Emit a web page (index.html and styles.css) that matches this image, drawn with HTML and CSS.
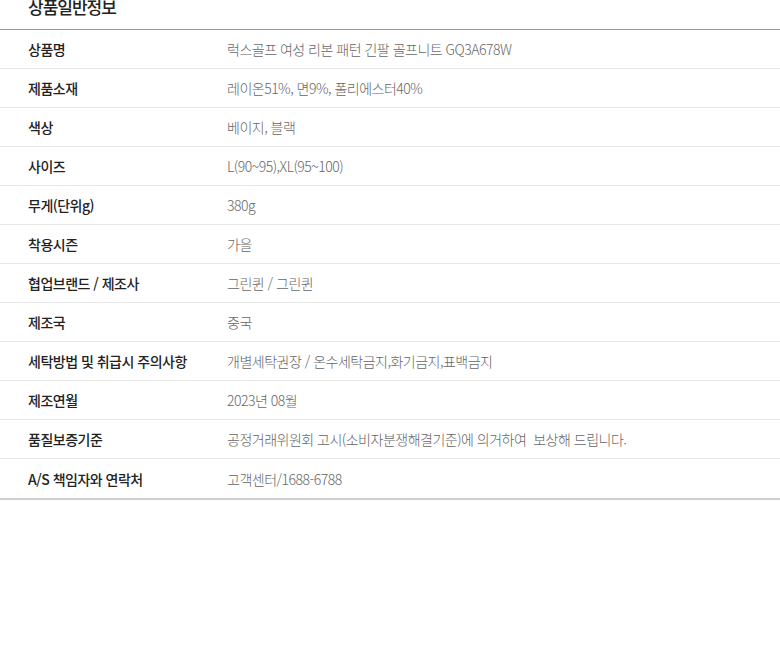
FILE: index.html
```html
<!DOCTYPE html>
<html lang="ko">
<head>
    <meta charset="UTF-8">
    <title>상품일반정보</title>
    <link rel="stylesheet" href="styles.css">
</head>
<body>
    <!-- 상품 정보 고시 -->
    <div class="product-info">
        <h2 class="info-title">상품일반정보</h2>
        <ul class="info-list">
            <li class="info-row"><span class="info-label">상품명</span><span class="info-value">럭스골프 여성 리본 패턴 긴팔 골프니트 GQ3A678W</span></li>
            <li class="info-row"><span class="info-label">제품소재</span><span class="info-value">레이온51%, 면9%, 폴리에스터40%</span></li>
            <li class="info-row"><span class="info-label">색상</span><span class="info-value">베이지, 블랙</span></li>
            <li class="info-row"><span class="info-label">사이즈</span><span class="info-value">L(90~95),XL(95~100)</span></li>
            <li class="info-row"><span class="info-label">무게(단위g)</span><span class="info-value">380g</span></li>
            <li class="info-row"><span class="info-label">착용시즌</span><span class="info-value">가을</span></li>
            <li class="info-row"><span class="info-label">협업브랜드 / 제조사</span><span class="info-value">그린퀸 / 그린퀸</span></li>
            <li class="info-row"><span class="info-label">제조국</span><span class="info-value">중국</span></li>
            <li class="info-row"><span class="info-label">세탁방법 및 취급시 주의사항</span><span class="info-value">개별세탁권장 / 온수세탁금지,화기금지,표백금지</span></li>
            <li class="info-row"><span class="info-label">제조연월</span><span class="info-value">2023년 08월</span></li>
            <li class="info-row"><span class="info-label">품질보증기준</span><span class="info-value">공정거래위원회 고시(소비자분쟁해결기준)에 의거하여&nbsp; 보상해 드립니다.</span></li>
            <li class="info-row"><span class="info-label">A/S 책임자와 연락처</span><span class="info-value">고객센터/1688-6788</span></li>
        </ul>
    </div>
</body>
</html>
```

FILE: styles.css
```css
/* 상품 정보 */
body {
    margin: 0;
    background: #fff;
    font-family: "Noto Sans CJK KR", "Noto Sans", sans-serif;
    color: #222;
}
.product-info {
    width: 780px;
}
.info-title {
    margin: -3px 0 0;
    padding: 0 28px 12px;
    font-size: 17px;
    line-height: 20px;
    font-weight: 500;
    letter-spacing: -1px;
    color: #222;
    border-bottom: 1px solid #9a9a9a;
}
.info-list {
    list-style: none;
    margin: 0;
    padding: 0;
    border-bottom: 2px solid #cfcfcf;
}
.info-row {
    display: flex;
    align-items: center;
    height: 38px;
    padding: 0 28px;
    font-size: 14px;
    letter-spacing: -0.5px;
    border-bottom: 1px solid #e6e6e6;
}
.info-row:last-child {
    border-bottom: none;
    height: 39px;
}
.info-label {
    width: 199px;
    flex-shrink: 0;
    font-weight: 500;
    color: #222;
}
.info-value {
    color: #666;
    font-weight: 300;
}
```
